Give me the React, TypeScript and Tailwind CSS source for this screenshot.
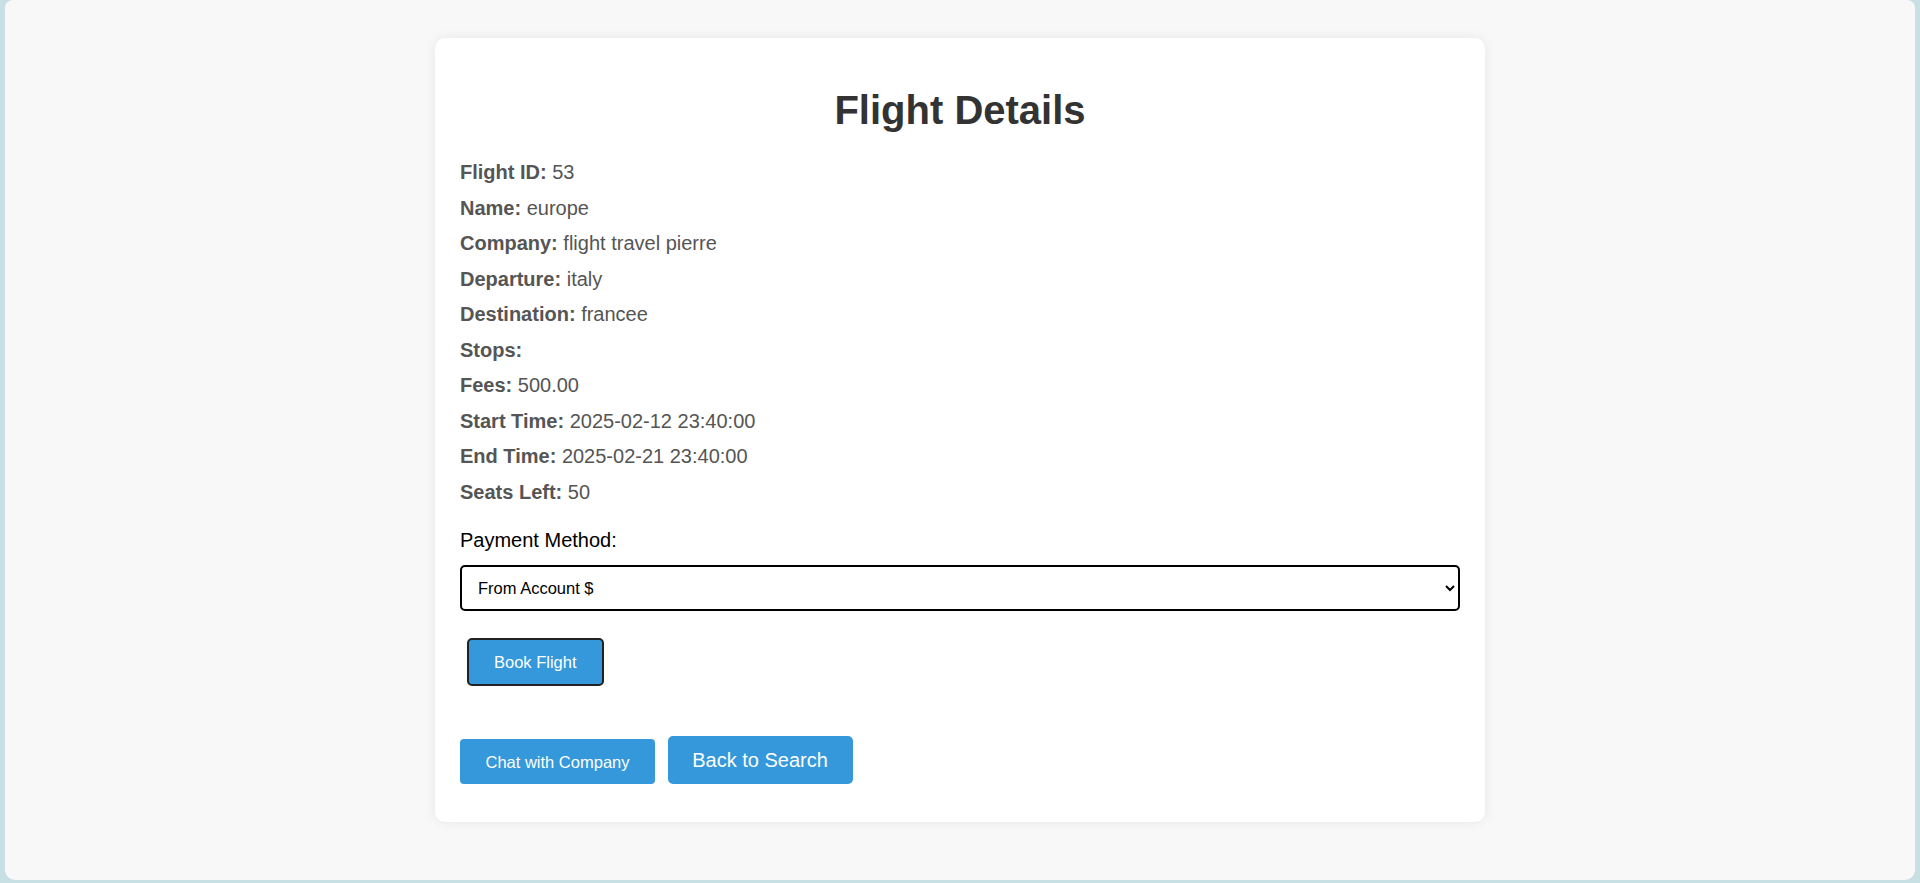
import React from 'react';

const details: [string, string][] = [
  ['Flight ID:', '53'],
  ['Name:', 'europe'],
  ['Company:', 'flight travel pierre'],
  ['Departure:', 'italy'],
  ['Destination:', 'francee'],
  ['Stops:', ''],
  ['Fees:', '500.00'],
  ['Start Time:', '2025-02-12 23:40:00'],
  ['End Time:', '2025-02-21 23:40:00'],
  ['Seats Left:', '50'],
];

export default function App() {
  return (
    <div className="h-screen bg-[#c8dfe3] px-[5px] pb-[3px] font-['Liberation_Sans',Arial,sans-serif]">
      <div className="h-full rounded-b-[10px] rounded-t-[8px] bg-[#f8f8f8] pt-[38px]">
        {/* Card */}
        <div className="mx-auto w-[1050px] rounded-[10px] bg-white px-[25px] pt-[49px] pb-[38px] shadow-[0_0_12px_rgba(0,0,0,0.08)]">
          <h2 className="text-center text-[40px] font-bold leading-[46px] text-[#333]">Flight Details</h2>

          {/* Detail rows */}
          <div className="mt-[22px] text-[20px] leading-[35.5px] text-[#555]">
            {details.map(([label, value]) => (
              <p key={label}>
                <strong className="font-bold">{label}</strong> {value}
              </p>
            ))}
          </div>

          <label className="mt-[19px] block text-[20px] leading-[22.4px] text-black">Payment Method:</label>
          <select
            defaultValue="account"
            className="mt-[14px] block h-[46px] w-full rounded-[5px] border-2 border-black bg-white pl-[12px] pr-[6px] text-[16.5px] text-black"
          >
            <option value="account">From Account $</option>
            <option value="card">Credit Card</option>
          </select>

          <button className="ml-[7px] mt-[27px] block h-[48px] rounded-[5px] border-2 border-[#222] bg-[#3498db] px-[25px] text-[16.5px] text-white">
            Book Flight
          </button>

          {/* Bottom actions */}
          <div className="mt-[50px] flex items-end gap-[12.5px]">
            <button className="h-[45px] w-[195px] rounded-[4px] bg-[#3498db] text-[16.5px] text-white">
              Chat with Company
            </button>
            <button className="h-[48px] w-[185px] rounded-[5px] bg-[#3498db] text-[20px] text-white">
              Back to Search
            </button>
          </div>
        </div>
      </div>
    </div>
  );
}
